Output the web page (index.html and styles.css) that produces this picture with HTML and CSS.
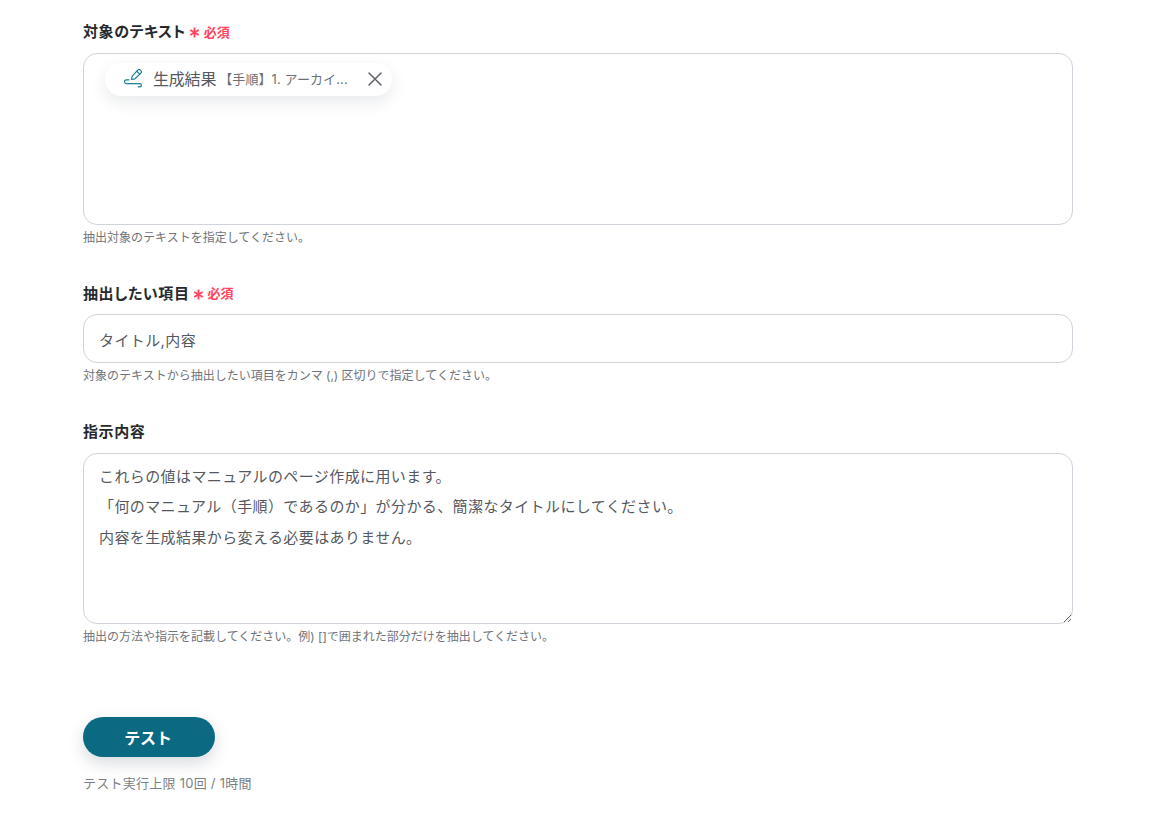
FILE: index.html
```html
<!DOCTYPE html>
<html lang="ja">
<head>
<meta charset="utf-8">
<title>抽出設定</title>
<link rel="stylesheet" href="styles.css">
</head>
<body>
<main class="form">
  <section class="field">
    <div class="label">対象のテキスト<span class="req"><svg class="star" width="11" height="11" viewBox="0 0 11 11" fill="none" stroke="#ff4560" stroke-width="1.9"><path d="M5.5 0.5v10M1.2 3l8.6 5M9.8 3L1.2 8"/></svg>必須</span></div>
    <div class="box box-tall">
      <div class="chip">
        <svg class="chip-icon" width="22" height="22" viewBox="0 0 22 22" fill="none" stroke="#1b7f94" stroke-width="1.2" stroke-linecap="round" stroke-linejoin="round"><path d="M8.5 11.5l.7-3.4L15 1.8a1.4 1.4 0 0 1 2 0l1.1 1.1a1.4 1.4 0 0 1 0 2L12 10.8z"/><path d="M13.7 3.2l3 3"/><path d="M6 11.8H3.4a1.9 1.9 0 0 0 0 3.8h13.4a1.6 1.6 0 0 1 0 3.2h-1.6"/></svg>
        <span class="chip-name">生成結果</span>
        <span class="chip-detail">【手順】1. アーカイ...</span>
        <svg class="chip-close" width="14" height="14" viewBox="0 0 14 14" fill="none" stroke="#5f6368" stroke-width="1.5" stroke-linecap="round"><path d="M1 1l12 12M13 1L1 13"/></svg>
      </div>
    </div>
    <p class="help">抽出対象のテキストを指定してください。</p>
  </section>
  <section class="field">
    <div class="label">抽出したい項目<span class="req"><svg class="star" width="11" height="11" viewBox="0 0 11 11" fill="none" stroke="#ff4560" stroke-width="1.9"><path d="M5.5 0.5v10M1.2 3l8.6 5M9.8 3L1.2 8"/></svg>必須</span></div>
    <input class="box input" type="text" value="タイトル,内容">
    <p class="help">対象のテキストから抽出したい項目をカンマ (,) 区切りで指定してください。</p>
  </section>
  <section class="field">
    <div class="label">指示内容</div>
    <textarea class="box area">これらの値はマニュアルのページ作成に用います。
「何のマニュアル（手順）であるのか」が分かる、簡潔なタイトルにしてください。
内容を生成結果から変える必要はありません。</textarea>
    <p class="help">抽出の方法や指示を記載してください。例) []で囲まれた部分だけを抽出してください。</p>
  </section>
  <button class="test" type="button">テスト</button>
  <p class="limit">テスト実行上限 10回 / 1時間</p>
</main>
</body>
</html>
```
FILE: styles.css
```css
* { box-sizing: border-box; }
html, body { margin: 0; background: #fff; }
body {
  font-family: Inter, "Noto Sans CJK JP", sans-serif;
  color: #55595f;
  height: 818px;
  overflow: hidden;
}
.form {
  width: 990px;
  margin-left: 83px;
  padding-top: 22.4px;
}
.field { margin-bottom: 37.9px; }
.label {
  display: flex;
  align-items: center;
  height: 20px;
  font-size: 15px;
  font-feature-settings: "palt";
  letter-spacing: 0.6px;
  line-height: 20px;
  font-weight: 700;
  color: #26292d;
  margin-bottom: 10.6px;
}
.req {
  display: flex;
  align-items: center;
  color: #ff4560;
  font-size: 13px;
  letter-spacing: 0;
  font-weight: 700;
  margin-left: 3px;
  margin-bottom: 1px;
}
.star { flex: none; margin-right: 4px; margin-top: 2px; }
.box {
  display: block;
  width: 100%;
  border: 1px solid #cfd3da;
  border-radius: 14px;
  background: #fff;
  color: #55595f;
  font-family: inherit;
  font-size: 15px;
  letter-spacing: 0.4px;
}
.box-tall { height: 172px; padding: 9px 21px; }
.input { height: 49px; padding: 2px 15px 0; outline: none; }
.area {
  height: 171px;
  padding: 8px 15px;
  line-height: 30.5px;
  outline: none;
  resize: vertical;
  overflow: hidden;
}
.chip {
  display: inline-flex;
  align-items: center;
  width: 287px;
  height: 33px;
  padding-left: 18px;
  border-radius: 17px;
  background: #fff;
  box-shadow: 0 6px 16px rgba(40, 50, 70, 0.1);
  letter-spacing: 0;
}
.chip-icon { flex: none; margin-right: 8px; }
.chip-name { font-size: 16px; letter-spacing: -0.2px; color: #55595f; margin: 0 3px 3px 0; white-space: nowrap; }
.chip-detail { font-size: 13px; letter-spacing: 0.1px; color: #6c7177; white-space: nowrap; width: 130px; margin-bottom: 2px; }
.chip-close { flex: none; margin-left: 19px; }
.help {
  margin: 5px 0 0;
  font-size: 12px;
  line-height: 16px;
  color: #6f747a;
}
.test {
  display: block;
  width: 132px;
  height: 40px;
  margin-top: 72px;
  padding: 0 2px 0 0;
  border: 0;
  border-radius: 20px;
  background: #0b6a82;
  color: #fff;
  font-family: inherit;
  font-size: 16px;
  letter-spacing: -0.2px;
  font-weight: 700;
  box-shadow: 0 6px 16px rgba(40, 50, 70, 0.18);
}
.limit {
  margin: 17px 0 0;
  font-size: 13px;
  letter-spacing: 0.25px;
  line-height: 18px;
  color: #7a7f85;
}
```
